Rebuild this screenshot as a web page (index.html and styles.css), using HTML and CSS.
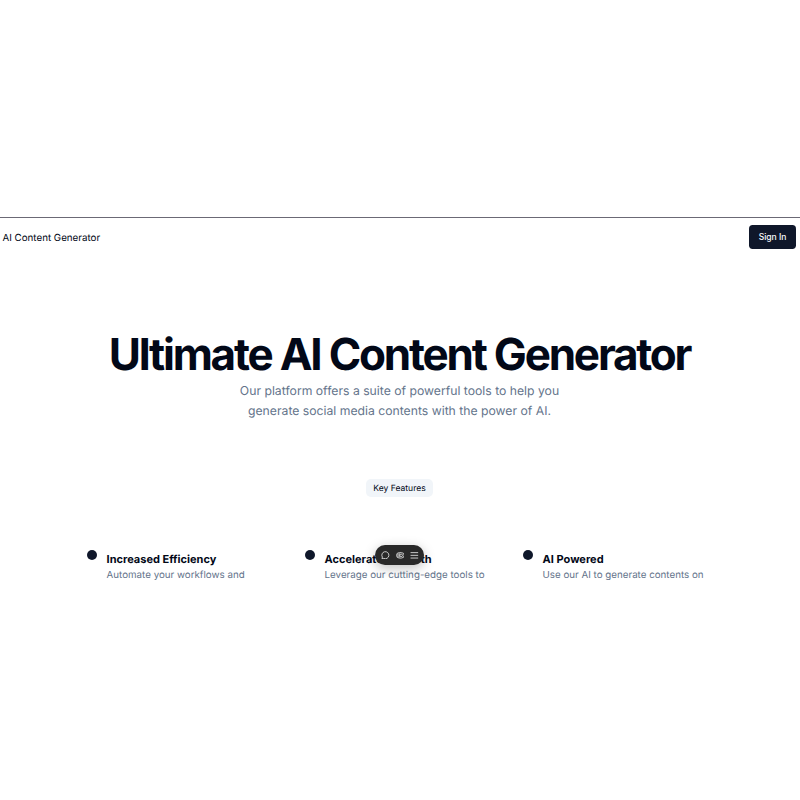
FILE: index.html
```html
<!DOCTYPE html>
<html lang="en">
<head>
<meta charset="utf-8">
<title>AI Content Generator</title>
<link rel="stylesheet" href="styles.css">
</head>
<body>
<div class="page">
  <header class="header">
    <span class="brand">AI Content Generator</span>
    <button class="sign-in">Sign In</button>
  </header>
  <main>
    <section class="hero">
      <h1>Ultimate AI Content Generator</h1>
      <p>Our platform offers a suite of powerful tools to help you<br>generate social media contents with the power of AI.</p>
    </section>
    <section class="features">
      <div class="badge">Key Features</div>
      <div class="grid">
        <article class="feature"><span class="dot"></span><div><h3>Increased Efficiency</h3><p>Automate your workflows and</p></div></article>
        <article class="feature"><span class="dot"></span><div><h3>Accelerated Growth</h3><p>Leverage our cutting-edge tools to</p></div></article>
        <article class="feature"><span class="dot"></span><div><h3>AI Powered</h3><p>Use our AI to generate contents on</p></div></article>
      </div>
    </section>
  </main>
  <div class="toolbar">
    <svg viewBox="0 0 16 16"><path d="M1.8 14.2 2.5 11.2A6.5 6.5 0 1 1 5.2 13.6Z"/></svg>
    <svg viewBox="0 0 16 16"><rect x="1" y="3" width="14" height="10" rx="5"/><circle cx="9.5" cy="8" r="2.4"/><path d="M6 4v8M3.6 5v6"/></svg>
    <svg viewBox="0 0 16 16"><path d="M1 3h14M1 8h14M1 13h14"/></svg>
  </div>
</div>
</body>
</html>
```

FILE: styles.css
```css
* { box-sizing: border-box; margin: 0; }
body { background: #fff; color: #020817; font-family: Inter, "Liberation Sans", sans-serif; text-rendering: geometricPrecision; }
.page { position: relative; height: 800px; padding-top: 217px; overflow: hidden; }
.header {
  display: flex; align-items: center; justify-content: space-between;
  height: 39px; padding: 0 3.7px 0 2.5px; border-top: 1px solid #6b6975;
}
.brand { padding-top: 2px; font-size: 9.77px; line-height: 15px; }
.sign-in {
  width: 47.5px; height: 24.4px; padding: 2px 0 0; border: 0; border-radius: 3.7px;
  background: #0f172a; color: #f8fafc; font: 500 8.55px/13px Inter, sans-serif;
}
.hero { padding-top: 76px; text-align: center; }
h1 { margin-left: -1px; font-size: 44px; line-height: 44px; font-weight: 700; letter-spacing: -2.2px; white-space: nowrap; }
.hero p { margin-top: 5px; font-size: 12.21px; line-height: 20px; color: #64748b; transform: translateX(-.5px); }
.features { display: flex; flex-direction: column; align-items: center; padding-top: 58px; }
.badge {
  height: 17.5px; margin-right: 1px; padding: 1px 7.3px 0; border-radius: 5px; background: #f1f5f9;
  font-size: 8.55px; line-height: 19px;
}
.grid { display: grid; grid-template-columns: repeat(3, 188px); column-gap: 30px; width: 626px; margin-top: 53px; }
.feature { display: flex; gap: 9.6px; white-space: nowrap; }
.dot { flex: none; width: 10px; height: 10px; border-radius: 50%; background: #0f172a; }
.feature div { padding-top: 1px; }
h3 { font-size: 11px; line-height: 17px; font-weight: 700; }
.feature p { padding-top: 1px; font-size: 9.77px; line-height: 14.6px; color: #64748b; }
.toolbar {
  position: absolute; left: 375px; top: 545px; width: 49px; height: 20px; padding-left: 1px;
  display: flex; align-items: center; justify-content: center; gap: 6px;
  border-radius: 10px; background: #292929; box-shadow: 0 3px 12px rgba(0, 0, 0, .25);
}
.toolbar svg { width: 8.7px; height: 8.7px; fill: none; stroke: #d6d6d6; stroke-width: 1.7; }
```
